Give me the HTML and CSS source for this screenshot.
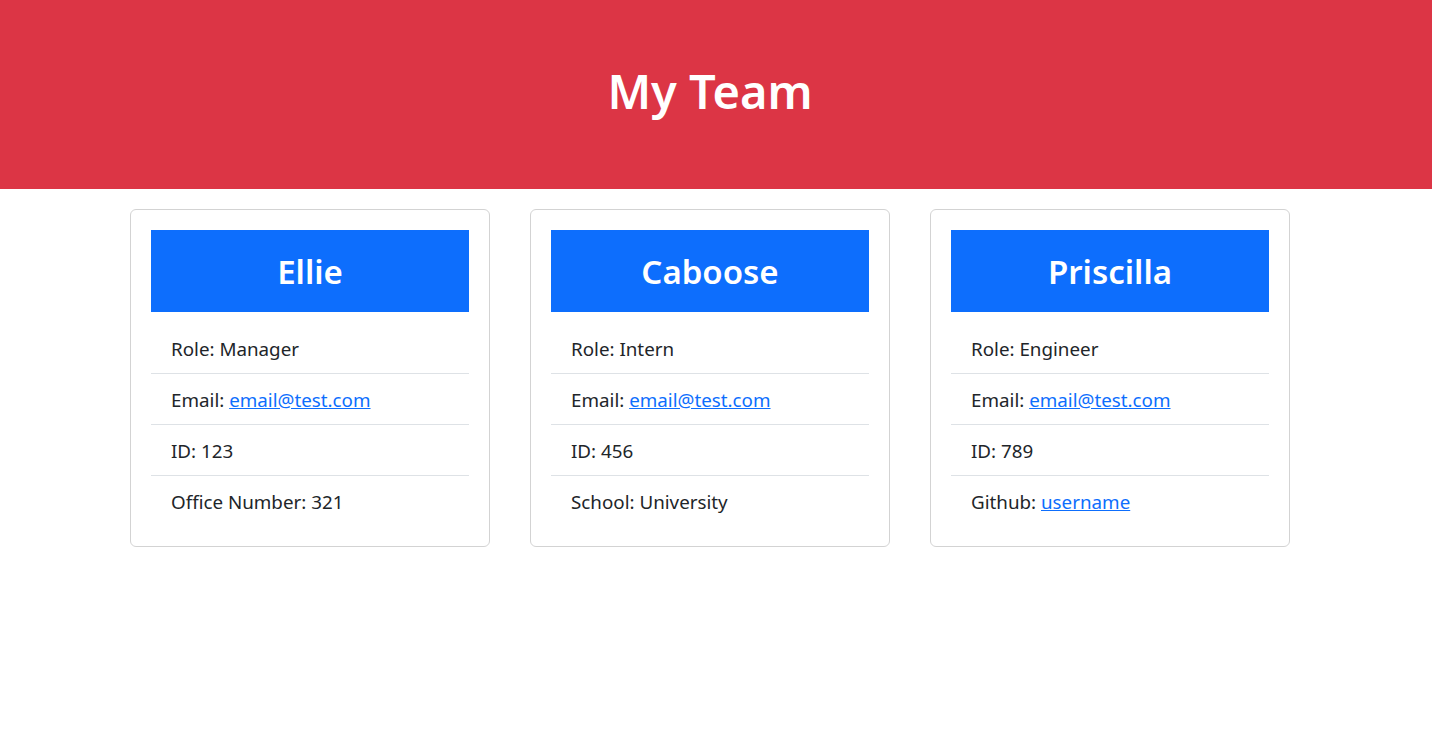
FILE: index.html
```html
<!DOCTYPE html>
<html lang="en">
<head>
<meta charset="utf-8">
<title>My Team</title>
<link rel="stylesheet" href="styles.css">
</head>
<body>
<header class="banner">
  <h1 class="banner-title">My Team</h1>
</header>
<main class="cards">
  <section class="card">
    <h2 class="card-name">Ellie</h2>
    <ul class="info">
      <li class="info-row">Role: Manager</li>
      <li class="info-row">Email: <a href="#" class="link">email@test.com</a></li>
      <li class="info-row">ID: 123</li>
      <li class="info-row">Office Number: 321</li>
    </ul>
  </section>
  <section class="card">
    <h2 class="card-name">Caboose</h2>
    <ul class="info">
      <li class="info-row">Role: Intern</li>
      <li class="info-row">Email: <a href="#" class="link">email@test.com</a></li>
      <li class="info-row">ID: 456</li>
      <li class="info-row">School: University</li>
    </ul>
  </section>
  <section class="card">
    <h2 class="card-name">Priscilla</h2>
    <ul class="info">
      <li class="info-row">Role: Engineer</li>
      <li class="info-row">Email: <a href="#" class="link">email@test.com</a></li>
      <li class="info-row">ID: 789</li>
      <li class="info-row">Github: <a href="#" class="link">username</a></li>
    </ul>
  </section>
</main>
</body>
</html>
```
FILE: styles.css
```css
* { box-sizing: border-box; }
body {
  margin: 0;
  font-family: "Noto Sans", "Open Sans", sans-serif;
  color: #212529;
  background: #fff;
}
.banner {
  background: #dc3545;
  height: 189px;
  display: flex;
  align-items: center;
  justify-content: center;
  padding-right: 12px;
}
.banner-title {
  margin: 0;
  color: #fff;
  font-size: 47px;
  font-weight: 600;
  line-height: 1.2;
  padding-bottom: 7px;
}
.cards {
  display: flex;
  justify-content: center;
  gap: 40px;
  padding: 20px 12px 0 0;
}
.card {
  width: 360px;
  border: 1px solid #d3d3d3;
  border-radius: 6px;
  padding: 20px;
}
.card-name {
  margin: 0;
  background: #0d6efd;
  color: #fff;
  text-align: center;
  font-size: 33px;
  font-weight: 600;
  line-height: 80px;
  height: 82px;
  padding-top: 2px;
}
.info {
  list-style: none;
  margin: 11px 0 0;
  padding: 0;
}
.info-row {
  font-size: 18.8px;
  line-height: 30px;
  padding: 10.5px 20px 9.5px;
  border-bottom: 1px solid #dee2e6;
}
.info-row:last-child { border-bottom: 0; }
.link { color: #0d6efd; text-decoration: underline; }
```
